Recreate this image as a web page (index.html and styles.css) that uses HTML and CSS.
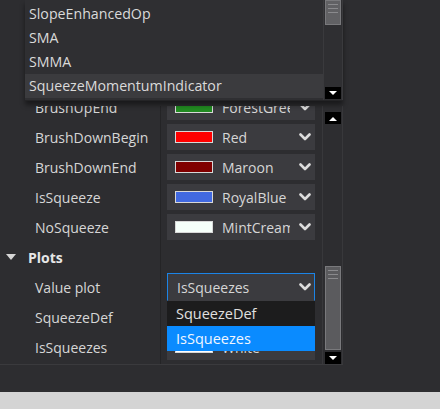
FILE: index.html
```html
<!DOCTYPE html>
<html>
<head>
<meta charset="utf-8">
<link rel="stylesheet" href="styles.css">
</head>
<body>
<div class="window">
  <div class="grid">
    <div class="grid-view">
      <div class="grid-rows">
        <div class="row">
          <div class="label">BrushUpEnd</div>
          <div class="value"><div class="cell"><span class="swatch" style="background:#228b22"></span><span class="text">ForestGreen</span><svg class="chev" viewBox="0 0 12 8"><polyline points="1.5,1.5 6,6 10.5,1.5"/></svg></div></div>
        </div>
        <div class="row">
          <div class="label">BrushDownBegin</div>
          <div class="value"><div class="cell"><span class="swatch" style="background:#ff0000"></span><span class="text">Red</span><svg class="chev" viewBox="0 0 12 8"><polyline points="1.5,1.5 6,6 10.5,1.5"/></svg></div></div>
        </div>
        <div class="row">
          <div class="label">BrushDownEnd</div>
          <div class="value"><div class="cell"><span class="swatch" style="background:#800000"></span><span class="text">Maroon</span><svg class="chev" viewBox="0 0 12 8"><polyline points="1.5,1.5 6,6 10.5,1.5"/></svg></div></div>
        </div>
        <div class="row">
          <div class="label">IsSqueeze</div>
          <div class="value"><div class="cell"><span class="swatch" style="background:#4169e1"></span><span class="text">RoyalBlue</span><svg class="chev" viewBox="0 0 12 8"><polyline points="1.5,1.5 6,6 10.5,1.5"/></svg></div></div>
        </div>
        <div class="row">
          <div class="label">NoSqueeze</div>
          <div class="value"><div class="cell"><span class="swatch" style="background:#f5fffa"></span><span class="text">MintCream</span><svg class="chev" viewBox="0 0 12 8"><polyline points="1.5,1.5 6,6 10.5,1.5"/></svg></div></div>
        </div>
        <div class="row category">
          <svg class="caret" viewBox="0 0 10 7"><polygon points="0,0 10,0 5,6"/></svg>
          <span class="cat-name">Plots</span>
        </div>
        <div class="row">
          <div class="label">Value plot</div>
          <div class="value"><div class="cell combo open"><span class="text">IsSqueezes</span><svg class="chev" viewBox="0 0 12 8"><polyline points="1.5,1.5 6,6 10.5,1.5"/></svg></div></div>
        </div>
        <div class="row">
          <div class="label">SqueezeDef</div>
          <div class="value"><div class="cell"><span class="swatch" style="background:#ffffff"></span><span class="text">White</span><svg class="chev" viewBox="0 0 12 8"><polyline points="1.5,1.5 6,6 10.5,1.5"/></svg></div></div>
        </div>
        <div class="row">
          <div class="label">IsSqueezes</div>
          <div class="value"><div class="cell"><span class="swatch" style="background:#ffffff"></span><span class="text">White</span><svg class="chev" viewBox="0 0 12 8"><polyline points="1.5,1.5 6,6 10.5,1.5"/></svg></div></div>
        </div>
      </div>
    </div>
    <div class="vscroll grid-scroll">
      <div class="sbtn"><svg viewBox="0 0 8 5"><polygon points="0,5 8,5 4,1"/></svg></div>
      <div class="track"></div>
      <div class="thumb tall"><i></i><i></i><i></i></div>
      <div class="sbtn"><svg viewBox="0 0 8 5"><polygon points="0,0 8,0 4,4"/></svg></div>
    </div>
  </div>
  <div class="status"></div>

  <!-- indicator picker list, dropped over the grid -->
  <div class="popup">
    <ul class="items">
      <li>SlopeEnhancedOp</li>
      <li>SMA</li>
      <li>SMMA</li>
      <li class="hover">SqueezeMomentumIndicator</li>
    </ul>
    <div class="vscroll popup-scroll">
      <div class="thumb short"><i></i><i></i><i></i></div>
      <div class="track"></div>
      <div class="sbtn"><svg viewBox="0 0 8 5"><polygon points="0,0 8,0 4,4"/></svg></div>
    </div>
  </div>

  <!-- open list of the "Value plot" combo -->
  <ul class="combo-list">
    <li>SqueezeDef</li>
    <li class="selected">IsSqueezes</li>
  </ul>
</div>
</body>
</html>
```

FILE: styles.css
```css
* { box-sizing: border-box; }

html, body {
  margin: 0;
  padding: 0;
  width: 440px;
  height: 409px;
  overflow: hidden;
  background: #2d2d30;
  font-family: "Open Sans", "Noto Sans", sans-serif;
  font-size: 14px;
  color: #d6d6d6;
}

.window {
  position: relative;
  width: 440px;
  height: 409px;
  display: flex;
  flex-direction: column;
}

/* property grid */
.grid {
  margin-top: 106px;
  width: 343px;
  height: 259px;
  display: flex;
  border-bottom: 1px solid #3a3a3d;
}

.grid-view {
  width: 322px;
  height: 100%;
  overflow: hidden;
  /* column divider between names and values */
  background: linear-gradient(to right, transparent 160px, #242426 160px, #242426 161px, transparent 161px);
}

.grid-rows {
  margin-top: -14px;
}

.row {
  height: 30px;
  display: grid;
  grid-template-columns: 161px 1fr;
  align-items: center;
}

.label {
  height: 100%;
  display: flex;
  align-items: center;
  padding-left: 35px;
  white-space: nowrap;
}

.value {
  height: 100%;
  padding: 2px 7px 2px 6px;
}

.cell {
  height: 26px;
  background: #3b3b3f;
  display: flex;
  align-items: center;
  padding-left: 8px;
  position: relative;
}

.swatch {
  width: 38px;
  height: 12px;
  border: 1px solid #d8d8d8;
  flex: none;
  margin-right: 9px;
}

.text {
  white-space: nowrap;
  overflow: hidden;
  width: 68px;
}

.chev {
  position: absolute;
  right: 4px;
  top: 9px;
  width: 12px;
  height: 8px;
  fill: none;
  stroke: #dcdcdc;
  stroke-width: 2.6;
  stroke-linecap: round;
  stroke-linejoin: round;
}

.combo {
  padding-left: 9px;
  border: 1px solid #1c84e6;
  height: 28px;
  margin-top: -1px;
  border-bottom-color: #3b3b3f;
}

.combo .text { width: 110px; }

.combo .chev { top: 9px; right: 3px; }

.row.category {
  display: flex;
  align-items: center;
}

.caret {
  width: 10px;
  height: 7px;
  margin-left: 6px;
  fill: #d6d6d6;
}

.cat-name {
  margin-left: 12px;
  font-weight: 700;
  color: #e6e6e6;
}

/* scrollbars */
.vscroll {
  display: flex;
  flex-direction: column;
  align-items: center;
  width: 21px;
}

.grid-scroll {
  padding-top: 6px;
  border-left: 1px solid #38383b;
  border-right: 1px solid #38383b;
}

.sbtn {
  width: 16px;
  height: 12px;
  background: #000;
  display: flex;
  align-items: center;
  justify-content: center;
  flex: none;
}

.sbtn svg {
  width: 8px;
  height: 5px;
  fill: #fff;
}

.track { flex: 1; }

.thumb {
  width: 16px;
  background: #5b5b5e;
  border: 1px solid #79797c;
  padding: 3px 2px 0 2px;
  display: flex;
  flex-direction: column;
  gap: 3px;
  flex: none;
}

.thumb i {
  display: block;
  height: 1px;
  background: #8a8a8d;
}

.thumb.tall { height: 84px; margin-bottom: 2px; }
.thumb.short { height: 25px; background: #616164; }

/* light status strip at the bottom */
.status {
  margin-top: auto;
  height: 17px;
  background: #d4d4d4;
}

/* dropped list of indicators */
.popup {
  position: absolute;
  left: 25px;
  top: 0;
  width: 318px;
  height: 101px;
  background: #2f2f32;
  display: flex;
  border-bottom: 1px solid #242426;
  box-shadow: 0 4px 5px rgba(0, 0, 0, 0.45);
  font-size: 14.2px;
}

.items {
  list-style: none;
  margin: 0;
  padding: 2px 0 0 0;
  width: 298px;
}

.items li {
  height: 24px;
  line-height: 24px;
  padding-left: 4px;
  color: #dadada;
  white-space: nowrap;
}

.items li.hover { background: #3b3b3e; }

.popup-scroll {
  width: 20px;
  border-left: 1px solid #3a3a3d;
  border-right: 1px solid #3a3a3d;
}

.popup-scroll .sbtn { margin-bottom: 1px; }

/* open combo list */
.combo-list {
  position: absolute;
  left: 167px;
  top: 301px;
  width: 148px;
  margin: 0;
  padding: 0;
  list-style: none;
  font-size: 14.5px;
}

.combo-list li {
  height: 25px;
  line-height: 25px;
  padding-left: 9px;
  background: #1c1c1d;
  color: #e0e0e0;
}

.combo-list li.selected {
  background: #0a8bff;
  color: #f0f6ff;
}
```
